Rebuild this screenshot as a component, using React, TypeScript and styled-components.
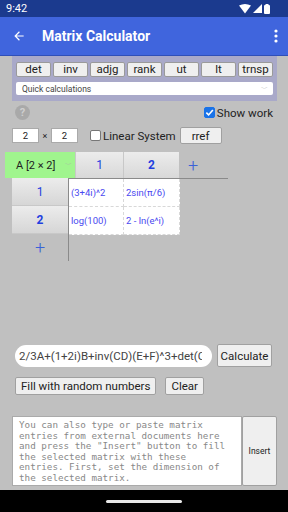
import React from 'react';
import styled, { createGlobalStyle } from 'styled-components';

const GlobalStyle = createGlobalStyle`
  html, body {
    margin: 0;
    padding: 0;
    background: #c0c0c0;
  }
  * {
    box-sizing: border-box;
  }
`;

const Screen = styled.div`
  width: 288px;
  height: 512px;
  display: flex;
  flex-direction: column;
  background: #c0c0c0;
  font-family: Roboto, 'Liberation Sans', sans-serif;
  overflow: hidden;
`;

const StatusBar = styled.div`
  height: 17px;
  background: #1b3a8e;
  color: #fff;
  display: flex;
  align-items: center;
  justify-content: space-between;
  padding: 0 18px 0 6px;
  font-size: 11px;
`;

const StatusIcons = styled.div`
  display: flex;
  align-items: center;
  gap: 2px;
`;

const AppBar = styled.div`
  height: 39px;
  background: #4065dd;
  border-bottom: 1px solid #2f4fb8;
  display: flex;
  align-items: center;
  padding: 0 10px 0 12px;
  color: #fff;
`;

const Title = styled.div`
  flex: 1;
  margin-left: 16px;
  font-size: 14px;
  font-weight: 700;
`;

const Content = styled.div`
  flex: 1;
  display: flex;
  flex-direction: column;
`;

const QuickPanel = styled.div`
  margin: 0 11px 0 12px;
  background: #a9a9c9;
  padding: 6px 4px 6px;
  display: flex;
  flex-direction: column;
  gap: 5px;
`;

const OpRow = styled.div`
  display: grid;
  grid-template-columns: repeat(7, 1fr);
  gap: 2px;
`;

const OpButton = styled.button`
  height: 15px;
  padding: 0;
  background: #efefef;
  border: 1px solid #9a9a9a;
  border-radius: 2px;
  font-family: Roboto, 'Liberation Sans', sans-serif;
  font-size: 11.5px;
  color: #222;
  line-height: 13px;
`;

const QuickSelect = styled.div`
  height: 13px;
  background: #fff;
  border-radius: 2px;
  display: flex;
  align-items: center;
  justify-content: space-between;
  padding: 0 5px 0 6px;
  font-size: 8.5px;
  color: #444;
`;

const Chevron = styled.span`
  color: #aaa;
  font-size: 7px;
`;

const WorkRow = styled.div`
  display: flex;
  align-items: center;
  justify-content: space-between;
  padding: 3px 15px 0 15px;
  height: 20px;
`;

const HelpIcon = styled.div`
  width: 15px;
  height: 15px;
  border-radius: 50%;
  background: #a9a9a9;
  color: #cfcfcf;
  font-size: 11px;
  font-weight: 700;
  display: flex;
  align-items: center;
  justify-content: center;
`;

const CheckLabel = styled.label`
  display: flex;
  align-items: center;
  gap: 2px;
  font-size: 11.5px;
  color: #222;
`;

const Box = styled.span<{ $checked?: boolean }>`
  width: 11px;
  height: 11px;
  border-radius: 2px;
  display: inline-flex;
  align-items: center;
  justify-content: center;
  background: ${(p) => (p.$checked ? '#1a73e8' : '#fff')};
  border: 1px solid ${(p) => (p.$checked ? '#1a73e8' : '#777')};
`;

const DimRow = styled.div`
  display: flex;
  align-items: center;
  padding: 6px 0 0 12px;
  height: 23px;
`;

const DimInput = styled.div`
  width: 27px;
  height: 15px;
  background: #fff;
  border: 1px solid #aaa;
  display: flex;
  align-items: center;
  justify-content: center;
  font-size: 9.5px;
  color: #222;
`;

const Times = styled.span`
  width: 12px;
  text-align: center;
  font-size: 9px;
  color: #222;
`;

const LinearLabel = styled(CheckLabel)`
  margin-left: 12px;
  gap: 2px;
`;

const GreyButton = styled.button<{ $h: number }>`
  height: ${(p) => p.$h}px;
  background: #efefef;
  border: 1px solid #a0a0a0;
  border-radius: 2px;
  padding: 0 5px;
  font-family: Roboto, 'Liberation Sans', sans-serif;
  font-size: 11.5px;
  color: #222;
  white-space: nowrap;
`;

const RrefButton = styled(GreyButton)`
  margin-left: 4px;
  width: 42px;
`;

const CalcButton = styled(GreyButton)`
  width: 55px;
  padding: 0;
`;

const Matrix = styled.div`
  margin-top: 8px;
  display: flex;
  flex-direction: column;
`;

const HeadRow = styled.div`
  display: flex;
  align-items: stretch;
  height: 26px;
  margin-left: 5px;
`;

const NameCell = styled.div`
  width: 70px;
  background: #a0f58e;
  display: flex;
  align-items: center;
  justify-content: space-between;
  padding: 0 3px 0 11px;
  font-size: 11px;
  color: #222;
`;

const HeadCell = styled.div<{ $w: number; $bold?: boolean }>`
  width: ${(p) => p.$w}px;
  background: linear-gradient(#ececec, #d8d8d8);
  border-left: 1px solid #c8c8c8;
  display: flex;
  align-items: center;
  justify-content: center;
  font-size: 12px;
  font-weight: ${(p) => (p.$bold ? 700 : 400)};
  color: #1f3fe0;
`;

const AddCol = styled.div`
  width: 28px;
  display: flex;
  align-items: center;
  justify-content: center;
  font-size: 18px;
  color: #3a62d8;
  font-weight: 300;
`;

const Body = styled.div`
  display: flex;
  margin-left: 12px;
`;

const RowHeads = styled.div`
  width: 56px;
  display: flex;
  flex-direction: column;
`;

const RowHead = styled.div<{ $bold?: boolean }>`
  height: 28px;
  background: linear-gradient(#ececec, #d6d6d6);
  border-bottom: 1px solid #c8c8c8;
  display: flex;
  align-items: center;
  justify-content: center;
  font-size: 12px;
  font-weight: ${(p) => (p.$bold ? 700 : 400)};
  color: #1f3fe0;
`;

const AddRow = styled.div`
  height: 27px;
  display: flex;
  align-items: center;
  justify-content: center;
  font-size: 18px;
  color: #3a62d8;
  font-weight: 300;
`;

const CellArea = styled.div`
  width: 160px;
  height: 83px;
  border-left: 1px solid #8a8a8a;
  border-top: 1px solid #8a8a8a;
`;

const CellGrid = styled.div`
  display: grid;
  grid-template-columns: 55px 56px;
  grid-auto-rows: 28px;
`;

const Cell = styled.div`
  background: #fff;
  border-right: 1px dashed #d8d8d8;
  border-bottom: 1px dashed #d8d8d8;
  display: flex;
  align-items: center;
  padding-left: 2px;
  font-size: 9.5px;
  color: #4a4af0;
  white-space: nowrap;
  overflow: hidden;
`;

const Spacer = styled.div`
  flex: 1;
`;

const ExprRow = styled.div`
  display: flex;
  align-items: center;
  gap: 5px;
  padding: 0 0 0 15px;
`;

const ExprInput = styled.div`
  width: 197px;
  height: 22px;
  background: #fff;
  border-radius: 11px;
  padding: 0 0 0 4px;
  display: flex;
  align-items: center;
  font-size: 11.5px;
  color: #444;
  white-space: nowrap;
  overflow: hidden;
`;

const ExprText = styled.span`
  width: 183px;
  overflow: hidden;
`;

const FillRow = styled.div`
  display: flex;
  align-items: center;
  gap: 9px;
  padding: 10px 0 0 15px;
`;

const InsertArea = styled.div`
  display: flex;
  margin: 21px 11px 4px 12px;
  height: 70px;
`;

const TextArea = styled.div`
  flex: 1;
  background: #fff;
  border: 1px solid #aaa;
  padding: 3px 10px 0 6px;
  font-family: 'DejaVu Sans Mono', 'Liberation Mono', monospace;
  font-size: 9.25px;
  line-height: 10.5px;
  color: #888;
  overflow: hidden;
`;

const InsertButton = styled.button`
  width: 35px;
  background: #efefef;
  border: 1px solid #a0a0a0;
  border-radius: 2px;
  font-family: Roboto, 'Liberation Sans', sans-serif;
  font-size: 8.5px;
  color: #222;
  padding: 0;
`;

const NavBar = styled.div`
  height: 22px;
  background: #000;
  display: flex;
  align-items: center;
  justify-content: center;
`;

const Handle = styled.div`
  width: 76px;
  height: 3px;
  border-radius: 2px;
  background: #e8e8e8;
`;

const Check = () => (
  <svg width="9" height="9" viewBox="0 0 10 10">
    <path d="M1.5 5.2 L4 7.7 L8.7 2.2" stroke="#fff" strokeWidth="1.8" fill="none" />
  </svg>
);

const ops = ['det', 'inv', 'adjg', 'rank', 'ut', 'lt', 'trnsp'];

const App: React.FC = () => {
  return (
    <Screen>
      <GlobalStyle />
      <StatusBar>
        <span>9:42</span>
        <StatusIcons>
          <svg width="12" height="10" viewBox="0 0 12 10">
            <path d="M0 1.5 Q6 -1.5 12 1.5 L6 9.5 Z" fill="#fff" />
          </svg>
          <svg width="9" height="9" viewBox="0 0 9 9">
            <path d="M9 0 L9 9 L0 9 Z" fill="#fff" />
          </svg>
          <svg width="6" height="10" viewBox="0 0 6 10">
            <rect x="0" y="1" width="6" height="9" rx="1" fill="#fff" />
            <rect x="1.5" y="0" width="3" height="1.5" fill="#fff" />
          </svg>
        </StatusIcons>
      </StatusBar>
      <AppBar>
        <svg width="14" height="14" viewBox="0 0 24 24">
          <path d="M20 11H7.83l5.59-5.59L12 4l-8 8 8 8 1.41-1.41L7.83 13H20v-2z" fill="#fff" />
        </svg>
        <Title>Matrix Calculator</Title>
        <svg width="4" height="14" viewBox="0 0 4 14">
          <circle cx="2" cy="2" r="1.6" fill="#fff" />
          <circle cx="2" cy="7" r="1.6" fill="#fff" />
          <circle cx="2" cy="12" r="1.6" fill="#fff" />
        </svg>
      </AppBar>
      <Content>
        <QuickPanel>
          <OpRow>
            {ops.map((op) => (
              <OpButton key={op}>{op}</OpButton>
            ))}
          </OpRow>
          <QuickSelect>
            <span>Quick calculations</span>
            <Chevron>﹀</Chevron>
          </QuickSelect>
        </QuickPanel>

        <WorkRow>
          <HelpIcon>?</HelpIcon>
          <CheckLabel>
            <Box $checked>
              <Check />
            </Box>
            Show work
          </CheckLabel>
        </WorkRow>

        <DimRow>
          <DimInput>2</DimInput>
          <Times>×</Times>
          <DimInput>2</DimInput>
          <LinearLabel>
            <Box />
            Linear System
          </LinearLabel>
          <RrefButton $h={17}>rref</RrefButton>
        </DimRow>

        <Matrix>
          <HeadRow>
            <NameCell>
              <span>A [2 × 2]</span>
              <Chevron>﹀</Chevron>
            </NameCell>
            <HeadCell $w={48}>1</HeadCell>
            <HeadCell $w={56} $bold>
              2
            </HeadCell>
            <AddCol>+</AddCol>
          </HeadRow>
          <Body>
            <RowHeads>
              <RowHead>1</RowHead>
              <RowHead $bold>2</RowHead>
              <AddRow>+</AddRow>
            </RowHeads>
            <CellArea>
              <CellGrid>
                <Cell>(3+4i)^2</Cell>
                <Cell>2sin(π/6)</Cell>
                <Cell>log(100)</Cell>
                <Cell>2 - ln(e^i)</Cell>
              </CellGrid>
            </CellArea>
          </Body>
        </Matrix>

        <Spacer />

        <ExprRow>
          <ExprInput>
            <ExprText>2/3A+(1+2i)B+inv(CD)(E+F)^3+det(C)</ExprText>
          </ExprInput>
          <CalcButton $h={23}>Calculate</CalcButton>
        </ExprRow>
        <FillRow>
          <GreyButton $h={18}>Fill with random numbers</GreyButton>
          <GreyButton $h={18}>Clear</GreyButton>
        </FillRow>

        <InsertArea>
          <TextArea>
            You can also type or paste matrix entries from external documents here and press the
            "Insert" button to fill the selected matrix with these entries. First, set the dimension
            of the selected matrix.
          </TextArea>
          <InsertButton>Insert</InsertButton>
        </InsertArea>
      </Content>
      <NavBar>
        <Handle />
      </NavBar>
    </Screen>
  );
};

export default App;
